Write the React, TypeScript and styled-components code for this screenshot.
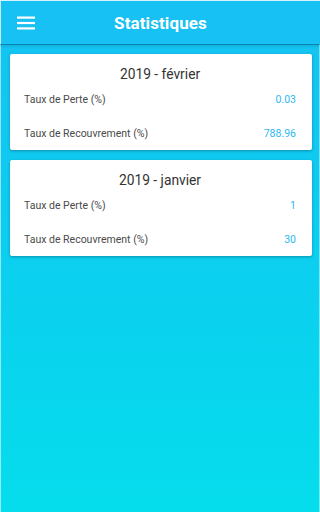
import React from "react";
import styled, { createGlobalStyle } from "styled-components";

const GlobalStyle = createGlobalStyle`
  html, body {
    margin: 0;
    padding: 0;
  }
  body {
    font-family: Roboto, "Liberation Sans", sans-serif;
  }
`;

type Stat = { label: string; value: string };
type Month = { title: string; stats: Stat[] };

const months: Month[] = [
  {
    title: "2019 - février",
    stats: [
      { label: "Taux de Perte (%)", value: "0.03" },
      { label: "Taux de Recouvrement (%)", value: "788.96" },
    ],
  },
  {
    title: "2019 - janvier",
    stats: [
      { label: "Taux de Perte (%)", value: "1" },
      { label: "Taux de Recouvrement (%)", value: "30" },
    ],
  },
];

export default function App() {
  return (
    <>
      <GlobalStyle />
      <Screen>
        <Header>
          <MenuButton aria-label="menu">
            <svg width="18" height="14" viewBox="0 0 18 14">
              <rect x="0" y="0.5" width="18" height="2.2" fill="#fff" />
              <rect x="0" y="5.9" width="18" height="2.2" fill="#fff" />
              <rect x="0" y="11.3" width="18" height="2.2" fill="#fff" />
            </svg>
          </MenuButton>
          <Title>Statistiques</Title>
        </Header>

        <Content>
          {months.map((m) => (
            <Card key={m.title}>
              <CardTitle>{m.title}</CardTitle>
              {m.stats.map((s) => (
                <Row key={s.label}>
                  <Label>{s.label}</Label>
                  <Value>{s.value}</Value>
                </Row>
              ))}
            </Card>
          ))}
        </Content>
      </Screen>
    </>
  );
}

const Screen = styled.div`
  min-height: 512px;
  box-sizing: border-box;
  display: flex;
  flex-direction: column;
  background: linear-gradient(180deg, #16c2f2 0%, #0dcdf0 45%, #05ddec 100%);
  box-shadow: inset 1px 1px 0 rgba(255, 255, 255, 0.55),
    inset -1px 0 0 rgba(255, 255, 255, 0.45);
`;

const Header = styled.header`
  position: relative;
  height: 44px;
  display: flex;
  align-items: center;
  justify-content: center;
  background: #17c1f3;
  border-top: 1px solid #d8f3fc;
  border-left: 1px solid #c8eefa;
  box-sizing: border-box;
  box-shadow: 0 1px 0 rgba(0, 60, 90, 0.35), 0 2px 3px rgba(0, 60, 90, 0.2);
  z-index: 1;
`;

const MenuButton = styled.button`
  position: absolute;
  left: 16px;
  top: 15px;
  padding: 0;
  border: none;
  background: none;
  display: flex;
`;

const Title = styled.h1`
  margin: 0;
  color: #fff;
  font-size: 17px;
  font-weight: 700;
  letter-spacing: 0.1px;
`;

const Content = styled.main`
  display: flex;
  flex-direction: column;
  gap: 10px;
  padding: 10px 8px 10px 10px;
`;

const Card = styled.section`
  background: #fff;
  border-radius: 2px;
  box-shadow: 0 1px 3px rgba(0, 0, 0, 0.3);
  padding: 12px 16px 0 14px;
`;

const CardTitle = styled.h2`
  margin: 0;
  height: 16px;
  line-height: 16px;
  text-align: center;
  font-size: 13.8px;
  font-weight: 400;
  color: #333;
`;

const Row = styled.div`
  height: 34px;
  display: flex;
  align-items: center;
  justify-content: space-between;
  font-size: 10.5px;
`;

const Label = styled.span`
  color: #4a4a4a;
`;

const Value = styled.span`
  color: #2cb9f2;
  font-size: 10.5px;
`;
